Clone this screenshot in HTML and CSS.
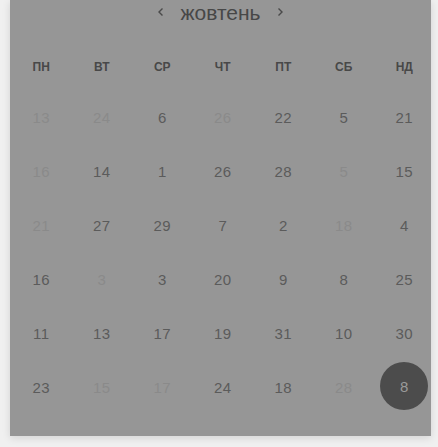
FILE: index.html
```html
<!DOCTYPE html>
<html lang="uk">
<head>
<meta charset="utf-8">
<link rel="stylesheet" href="styles.css">
</head>
<body>
<div class="card">
  <div class="month">
    <svg class="chev" width="8" height="10" viewBox="0 0 8 10"><path d="M5.5 1.5 L2 5 L5.5 8.5" fill="none" stroke="#4a4a4a" stroke-width="1.4"/></svg>
    <span class="month-name">жовтень</span>
    <svg class="chev" width="8" height="10" viewBox="0 0 8 10"><path d="M2.5 1.5 L6 5 L2.5 8.5" fill="none" stroke="#4a4a4a" stroke-width="1.4"/></svg>
  </div>
  <div class="grid weekdays">
    <div>пн</div><div>вт</div><div>ср</div><div>чт</div><div>пт</div><div>сб</div><div>нд</div>
  </div>
  <div class="grid days">
    <div class="d faded">13</div><div class="d faded">24</div><div class="d">6</div><div class="d faded">26</div><div class="d">22</div><div class="d">5</div><div class="d">21</div>
    <div class="d faded">16</div><div class="d">14</div><div class="d">1</div><div class="d">26</div><div class="d">28</div><div class="d faded">5</div><div class="d">15</div>
    <div class="d faded">21</div><div class="d">27</div><div class="d">29</div><div class="d">7</div><div class="d">2</div><div class="d faded">18</div><div class="d">4</div>
    <div class="d">16</div><div class="d faded">3</div><div class="d">3</div><div class="d">20</div><div class="d">9</div><div class="d">8</div><div class="d">25</div>
    <div class="d">11</div><div class="d">13</div><div class="d">17</div><div class="d">19</div><div class="d">31</div><div class="d">10</div><div class="d">30</div>
    <div class="d">23</div><div class="d faded">15</div><div class="d faded">17</div><div class="d">24</div><div class="d">18</div><div class="d faded">28</div><div class="d"><span class="sel">8</span></div>
  </div>
</div>
</body>
</html>
```
FILE: styles.css
```css
html, body {
  margin: 0;
  padding: 0;
  background: #f0f0f0;
}
body {
  width: 438px;
  height: 447px;
  overflow: hidden;
  font-family: "Liberation Sans", Arial, sans-serif;
}
.card {
  margin: 0 7px 0 10px;
  width: 421px;
  height: 436px;
  box-sizing: border-box;
  background: #969696;
  box-shadow: 0 2px 8px rgba(0, 0, 0, 0.12);
  padding-top: 1px;
}
.month {
  height: 24px;
  display: flex;
  align-items: center;
  justify-content: center;
  gap: 15px;
  color: #474747;
}
.month-name {
  font-size: 21px;
  line-height: 24px;
  font-weight: 400;
}
.chev {
  display: block;
  margin-top: -2px;
}
.grid {
  display: grid;
  grid-template-columns: repeat(7, 60.5px);
  margin-left: 1px;
}
.weekdays {
  margin-top: 32px;
  height: 20px;
  line-height: 20px;
  font-size: 12px;
  font-weight: 700;
  text-transform: uppercase;
  color: #484848;
  text-align: center;
}
.days {
  margin-top: 13px;
  grid-auto-rows: 54px;
}
.d {
  display: flex;
  align-items: center;
  justify-content: center;
  font-size: 15px;
  letter-spacing: 0.4px;
  color: #5b5b5b;
}
.d.faded {
  color: #8a8a8a;
}
.sel {
  width: 48px;
  height: 48px;
  border-radius: 50%;
  background: #4c4c4c;
  color: #9a9a9a;
  display: flex;
  align-items: center;
  justify-content: center;
  margin-top: -2px;
}
```
